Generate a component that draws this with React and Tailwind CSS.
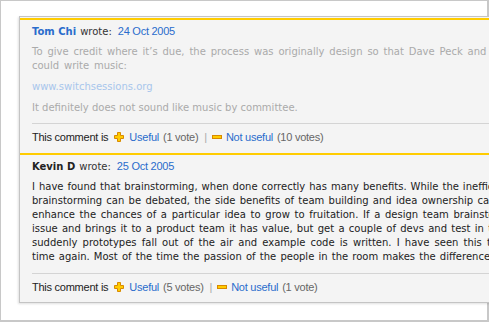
import React from 'react';

const sans = "font-['DejaVu_Sans',Verdana,sans-serif]";
const arial = "font-['Liberation_Sans',Arial,sans-serif] text-[11px] tracking-[-0.25px]";

const PlusIcon = () => (
  <svg width="10" height="10" viewBox="0 0 10 10" className="shrink-0">
    <polygon points="3.5,0.5 6.5,0.5 6.5,3.5 9.5,3.5 9.5,6.5 6.5,6.5 6.5,9.5 3.5,9.5 3.5,6.5 0.5,6.5 0.5,3.5 3.5,3.5" fill="#ffcc00" stroke="#d88a00" strokeWidth="1" />
  </svg>
);

const MinusIcon = () => (
  <svg width="10" height="4" viewBox="0 0 10 4" className="shrink-0">
    <rect x="0.5" y="0.5" width="9" height="3" fill="#ffcc00" stroke="#d88a00" strokeWidth="1" />
  </svg>
);

const Votes = ({ up, down, top }) => (
  <div className={`${top} border-t border-[#d4d4d4] pt-[6px] flex items-center leading-[14px] ${arial} text-[#222] whitespace-nowrap`}>
    <span>This comment is</span>
    <span className="ml-[6px]"><PlusIcon /></span>
    <a className="ml-[5px] text-[#2a6ccc]">Useful</a>
    <span className="ml-[4px] text-[#666]">{up}</span>
    <span className="ml-[6px] text-[#aaa]">|</span>
    <span className="ml-[5px] flex items-center"><MinusIcon /></span>
    <a className="ml-[4px] text-[#2a6ccc]">Not useful</a>
    <span className="ml-[4px] text-[#666]">{down}</span>
  </div>
);

const Header = ({ name, date, nameClass }) => (
  <div className="flex items-baseline leading-[14px] whitespace-nowrap">
    <span className={`${sans} text-[10px] font-bold ${nameClass}`}>{name}</span>
    <span className={`${sans} text-[10px] text-[#333] ml-[4px]`}>wrote:</span>
    <span className={`${arial} text-[#2a6ccc] ml-[6px]`}>{date}</span>
  </div>
);

// justified lines of the second comment (the rest runs off the right edge)
const kevinLines = [
  ['I have found that brainstorming, when done correctly has many benefits. While the inefficiencies of', '[word-spacing:0.8px]'],
  ['brainstorming can be debated, the side benefits of team building and idea ownership can greatly', '[word-spacing:1.1px]'],
  ['enhance the chances of a particular idea to grow to fruitation. If a design team brainstorms on an', '[word-spacing:1.5px]'],
  ['issue and brings it to a product team it has value, but get a couple of devs and test in the room and', '[word-spacing:1.1px]'],
  ['suddenly prototypes fall out of the air and example code is written. I have seen this time and', '[word-spacing:2px]'],
  ['time again. Most of the time the passion of the people in the room makes the difference.', '[word-spacing:1px]'],
];

export default function App() {
  return (
    <div className="w-[489px] h-[322px] overflow-hidden bg-white">
      <div className="h-full border border-r-2 border-b-2 border-[#c8c8c8] pt-[15px] pl-[18px]">
        <div className="w-[640px] bg-[#f4f4f4] border border-[#c4c4c4] pt-px shadow-[-1px_1px_2px_rgba(0,0,0,0.12)]">
          {/* first comment, faded */}
          <div className="border-t-2 border-[#ffcc00] px-[12px] pt-[4px] pb-[9px]">
            <Header name="Tom Chi" date="24 Oct 2005" nameClass="text-[#2a6ccc]" />
            <div className={`${sans} text-[10px] leading-[14px] text-[#aaa] mt-[6px] whitespace-nowrap`}>
              <p className="[word-spacing:1.7px]">
                To give credit where it’s due, the process was originally design so that Dave Peck and I
                <br />
                could write music:
              </p>
              <p className="mt-[7px] text-[#a8c6ec]">www.switchsessions.org</p>
              <p className="mt-[7px]">It definitely does not sound like music by committee.</p>
            </div>
            <Votes up="(1 vote)" down="(10 votes)" top="mt-[8px]" />
          </div>

          {/* second comment */}
          <div className="border-t-2 border-[#ffcc00] px-[12px] pt-[4px] pb-[8px]">
            <Header name="Kevin D" date="25 Oct 2005" nameClass="text-[#222]" />
            <p className={`${sans} text-[10px] leading-[14px] text-[#222] mt-[6px] whitespace-nowrap`}>
              {kevinLines.map(([text, ws]) => (
                <span key={text} className={`block ${ws}`}>{text}</span>
              ))}
            </p>
            <Votes up="(5 votes)" down="(1 vote)" top="mt-[9px]" />
          </div>
        </div>
      </div>
    </div>
  );
}
